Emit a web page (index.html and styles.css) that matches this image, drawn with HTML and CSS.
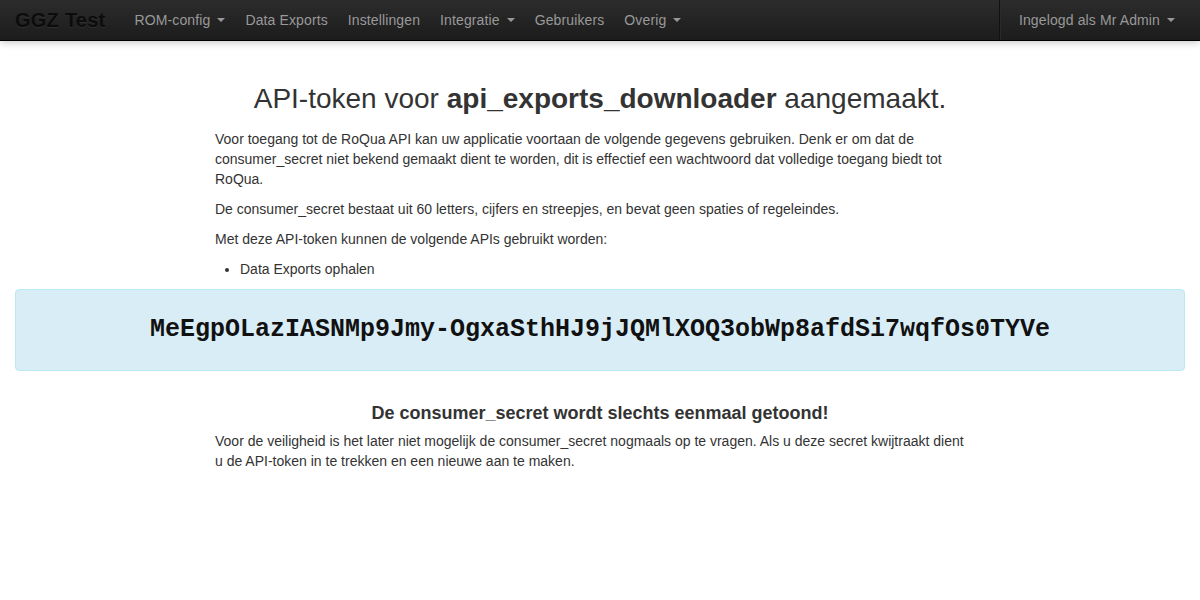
FILE: index.html
```html
<!DOCTYPE html>
<html>
<head>
<meta charset="utf-8">
<link rel="stylesheet" href="styles.css">
</head>
<body>
<div class="navbar">
  <a class="brand">GGZ Test</a>
  <ul class="nav">
    <li>ROM-config <b class="caret"></b></li>
    <li>Data Exports</li>
    <li>Instellingen</li>
    <li>Integratie <b class="caret"></b></li>
    <li>Gebruikers</li>
    <li>Overig <b class="caret"></b></li>
  </ul>
  <ul class="nav nav-right">
    <li>Ingelogd als Mr Admin <b class="caret"></b></li>
  </ul>
</div>
<div class="container">
  <h1>API-token voor <strong>api_exports_downloader</strong> aangemaakt.</h1>
  <p>Voor toegang tot de RoQua API kan uw applicatie voortaan de volgende gegevens gebruiken. Denk er om dat de consumer_secret niet bekend gemaakt dient te worden, dit is effectief een wachtwoord dat volledige toegang biedt tot RoQua.</p>
  <p>De consumer_secret bestaat uit 60 letters, cijfers en streepjes, en bevat geen spaties of regeleindes.</p>
  <p>Met deze API-token kunnen de volgende APIs gebruikt worden:</p>
  <ul class="list">
    <li>Data Exports ophalen</li>
  </ul>
</div>
<div class="well">MeEgpOLazIASNMp9Jmy-OgxaSthHJ9jJQMlXOQ3obWp8afdSi7wqfOs0TYVe</div>
<div class="container">
  <h3>De consumer_secret wordt slechts eenmaal getoond!</h3>
  <p class="narrow">Voor de veiligheid is het later niet mogelijk de consumer_secret nogmaals op te vragen. Als u deze secret kwijtraakt dient u de API-token in te trekken en een nieuwe aan te maken.</p>
</div>
</body>
</html>
```
FILE: styles.css
```css
* { box-sizing: border-box; }
body {
  margin: 0;
  font-family: "Liberation Sans", Arial, sans-serif;
  font-size: 14px;
  line-height: 20px;
  color: #333;
  background: #fff;
}
.navbar {
  height: 41px;
  display: flex;
  align-items: stretch;
  background: linear-gradient(to bottom, #2c2c2c, #1c1c1c);
  border-bottom: 1px solid #000;
  box-shadow: 0 1px 8px rgba(0,0,0,0.25);
}
.brand {
  display: block;
  padding: 10px 19px 10px 15px;
  font-size: 20px;
  font-weight: bold;
  line-height: 20px;
  letter-spacing: 0.25px;
  color: #0c0c0c;
  text-shadow: 0 1px 0 rgba(255,255,255,0.08);
}
.nav {
  display: flex;
  list-style: none;
  margin: 0;
  padding: 0;
}
.nav li {
  padding: 10px 10px;
  color: #999;
  line-height: 20px;
  font-size: 14px;
  letter-spacing: 0.12px;
  white-space: nowrap;
}
.nav-right {
  margin-left: auto;
  border-left: 1px solid #111;
  box-shadow: inset 1px 0 0 #2a2a2a;
  padding: 0 15px 0 9px;
}
.caret {
  display: inline-block;
  width: 0;
  height: 0;
  vertical-align: middle;
  margin-top: -2px;
  margin-left: 3px;
  border-top: 4px solid #999;
  border-left: 4px solid transparent;
  border-right: 4px solid transparent;
}
.container {
  width: 770px;
  margin: 0 auto;
}
h1 {
  margin: 38px 0 10px;
  font-size: 28px;
  line-height: 40px;
  font-weight: normal;
  text-align: center;
  color: #333;
}
h1 strong { font-weight: bold; }
p { margin: 0 0 10px; }
.narrow { margin-right: 14px; }
.list {
  margin: 0 0 10px 25px;
  padding: 0;
}
.well {
  margin: 10px 15px 20px;
  height: 82px;
  display: flex;
  align-items: center;
  justify-content: center;
  background: #d9edf7;
  border: 1px solid #bce8f1;
  border-radius: 4px;
  font-family: "Liberation Mono", "Courier New", monospace;
  font-weight: bold;
  font-size: 25px;
  color: #111;
}
h3 {
  margin: 32px 0 8px;
  font-size: 18px;
  line-height: 20px;
  text-align: center;
  font-weight: bold;
}
```
